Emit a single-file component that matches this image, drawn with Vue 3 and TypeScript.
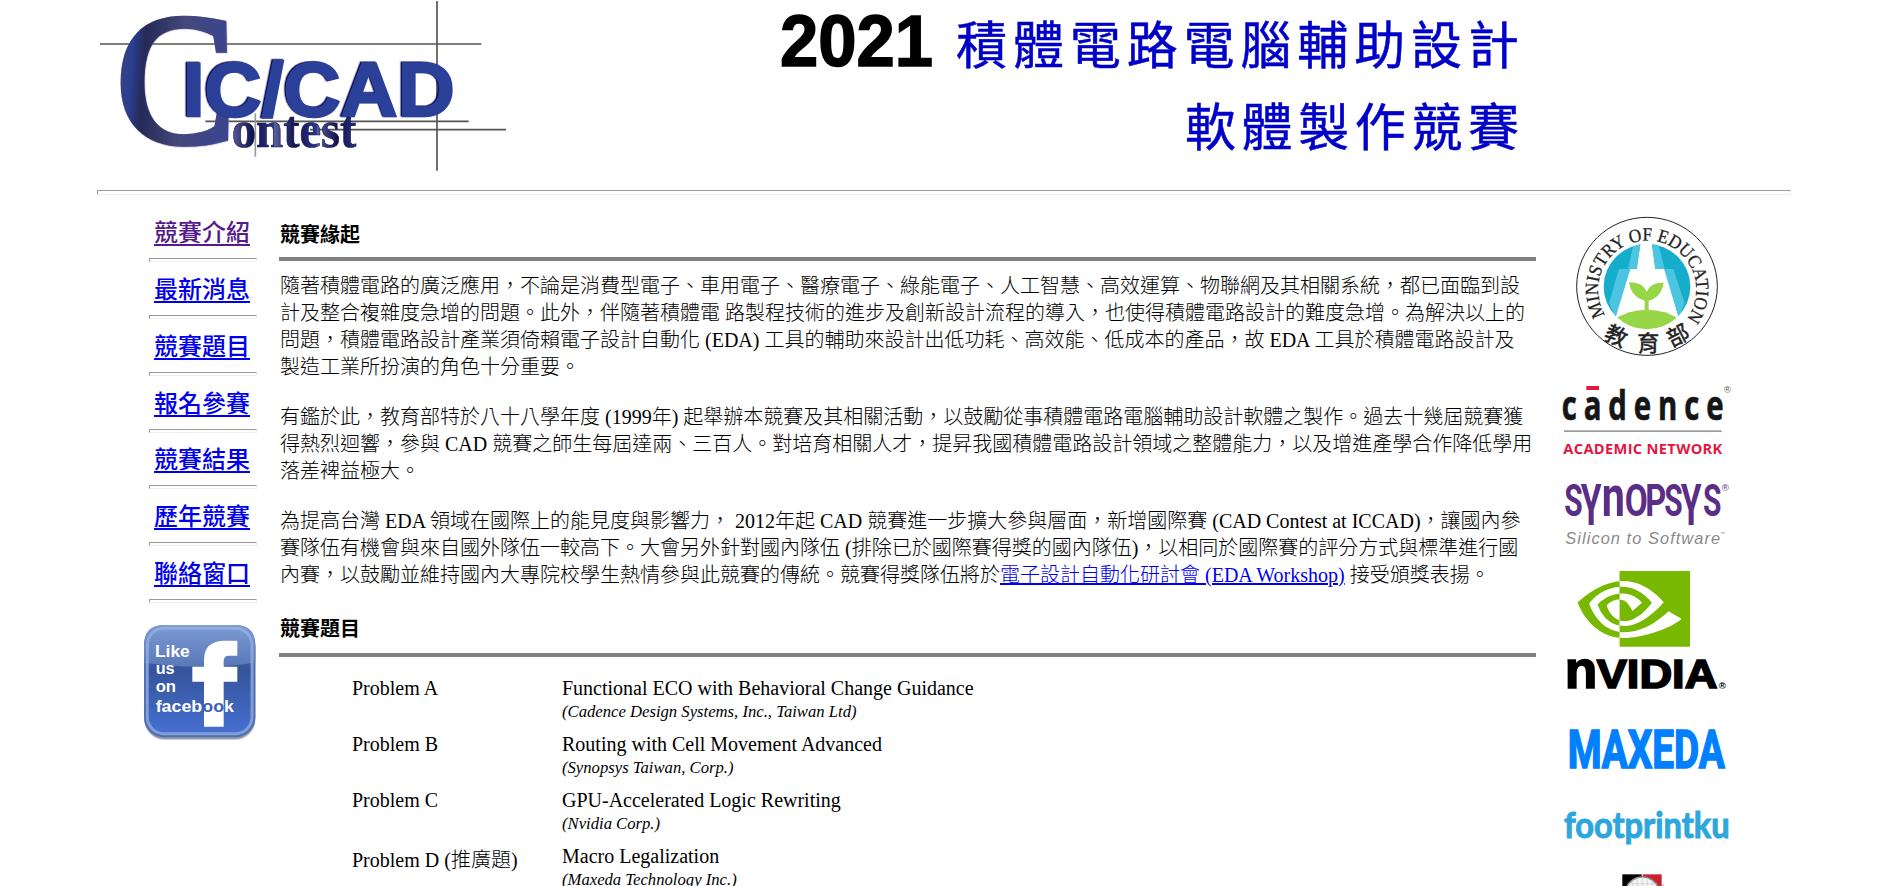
<script setup lang="ts">
interface NavItem { label: string; visited?: boolean }
interface Problem { name: string; title: string; sponsor: string; lowered?: boolean }

const nav: NavItem[] = [
  { label: '競賽介紹', visited: true },
  { label: '最新消息' },
  { label: '競賽題目' },
  { label: '報名參賽' },
  { label: '競賽結果' },
  { label: '歷年競賽' },
  { label: '聯絡窗口' },
]

const intro: string[][] = [
  [
    '隨著積體電路的廣泛應用，不論是消費型電子、車用電子、醫療電子、綠能電子、人工智慧、高效運算、物聯網及其相關系統，都已面臨到設',
    '計及整合複雜度急增的問題。此外，伴隨著積體電 路製程技術的進步及創新設計流程的導入，也使得積體電路設計的難度急增。為解決以上的',
    '問題，積體電路設計產業須倚賴電子設計自動化 (EDA) 工具的輔助來設計出低功耗、高效能、低成本的產品，故 EDA 工具於積體電路設計及',
    '製造工業所扮演的角色十分重要。',
  ],
  [
    '有鑑於此，教育部特於八十八學年度 (1999年) 起舉辦本競賽及其相關活動，以鼓勵從事積體電路電腦輔助設計軟體之製作。過去十幾屆競賽獲',
    '得熱烈迴響，參與 CAD 競賽之師生每屆達兩、三百人。對培育相關人才，提昇我國積體電路設計領域之整體能力，以及增進產學合作降低學用',
    '落差裨益極大。',
  ],
]

const problems: Problem[] = [
  { name: 'Problem A', title: 'Functional ECO with Behavioral Change Guidance', sponsor: '(Cadence Design Systems, Inc., Taiwan Ltd)' },
  { name: 'Problem B', title: 'Routing with Cell Movement Advanced', sponsor: '(Synopsys Taiwan, Corp.)' },
  { name: 'Problem C', title: 'GPU-Accelerated Logic Rewriting', sponsor: '(Nvidia Corp.)' },
  { name: 'Problem D (推廣題)', title: 'Macro Legalization', sponsor: '(Maxeda Technology Inc.)', lowered: true },
]
</script>

<template>
  <div class="page" lang="zh-Hant">
    <header class="banner">
      <svg class="logo" viewBox="0 0 1290 570" role="img" aria-label="CIC/CAD Contest">
        <defs>
          <linearGradient id="bigC" x1="0" x2="1" y1="0" y2="0.1">
            <stop offset="0" stop-color="#8582ac" />
            <stop offset="0.07" stop-color="#3a4080" />
            <stop offset="0.17" stop-color="#2a3f92" />
            <stop offset="0.27" stop-color="#252a58" />
            <stop offset="0.6" stop-color="#45487c" />
            <stop offset="1" stop-color="#3a4590" />
          </linearGradient>
          <linearGradient id="small" x1="0" x2="0.34" y1="0" y2="0" spreadMethod="repeat">
            <stop offset="0" stop-color="#5a5f9c" />
            <stop offset="0.5" stop-color="#10104a" />
            <stop offset="1" stop-color="#2b3990" />
          </linearGradient>
        </defs>
        <g stroke="#555" stroke-width="5" fill="none">
          <path d="M30 132H1174M1041 3V512M346 364H1136M660 389H1248" />
          <path d="M496 340V470" stroke="#999" />
        </g>
        <text class="serif bevel" font-size="558" transform="translate(78 427) scale(0.965 1)" fill="url(#bigC)" stroke="url(#bigC)" stroke-width="17">C</text>
        <text class="sans inset" font-weight="700" font-size="230" x="278" y="349" textLength="816" lengthAdjust="spacingAndGlyphs" fill="#2b4099" stroke="#2b4099" stroke-width="7">IC/CAD</text>
        <text class="serif" font-weight="700" font-size="158" x="425" y="441" textLength="374" lengthAdjust="spacingAndGlyphs" fill="url(#small)" stroke="#14144e" stroke-width="2">ontest</text>
      </svg>
      <svg class="title" viewBox="0 0 780 190" role="img" aria-label="2021 積體電路電腦輔助設計軟體製作競賽">
        <text class="sans" font-weight="700" font-size="73" x="10" y="66" textLength="153" lengthAdjust="spacingAndGlyphs" stroke="#000" stroke-width="1.5">2021</text>
        <g class="kai" font-size="51" fill="#0000c8" stroke="#0000c8" stroke-width="0.5">
          <text x="186" y="64" textLength="563">積體電路電腦輔助設計</text>
          <text x="415" y="146" textLength="334">軟體製作競賽</text>
        </g>
      </svg>
    </header>
    <hr class="divider" />

    <div class="columns">
      <nav class="menu">
        <div v-for="item in nav" :key="item.label" class="menu-item">
          <a href="#" :class="{ visited: item.visited }">{{ item.label }}</a>
          <hr />
        </div>
        <svg class="facebook" viewBox="30 660 360 380" role="img" aria-label="Like us on facebook">
          <defs>
            <linearGradient id="fbBase" x1="0" x2="0" y1="0" y2="1">
              <stop offset="0" stop-color="#4b6db5" />
              <stop offset="0.4" stop-color="#36549b" />
              <stop offset="1" stop-color="#456fd0" />
            </linearGradient>
            <linearGradient id="fbGloss" x1="0" x2="0" y1="0" y2="1">
              <stop offset="0" stop-color="#7d9ad2" />
              <stop offset="1" stop-color="#5878b8" />
            </linearGradient>
          </defs>
          <rect x="44" y="684" width="332" height="336" rx="60" fill="#000" opacity="0.2" />
          <rect x="42" y="680" width="334" height="336" rx="60" fill="#3a4f80" opacity="0.5" />
          <rect x="42" y="675" width="334" height="336" rx="60" fill="#4c6fb8" />
          <rect x="54" y="688" width="310" height="310" rx="46" fill="url(#fbBase)" />
          <path d="M42 788V735Q42 675 102 675H316Q376 675 376 735V788Q209 812 42 788Z" fill="url(#fbGloss)" />
          <rect x="52" y="685" width="314" height="316" rx="50" fill="none" stroke="#9fb7e3" stroke-opacity="0.65" stroke-width="9" />
          <path d="M222 980V845H187V800H222V780Q222 722 285 722H322V767H296Q281 767 281 784V800H322V845H281V980Z" fill="#fff" />
          <g class="sans" font-weight="700" font-size="52" fill="#fff">
            <text x="75" y="770" textLength="104" lengthAdjust="spacingAndGlyphs">Like</text>
            <text x="77" y="823" textLength="57" lengthAdjust="spacingAndGlyphs">us</text>
            <text x="77" y="877" textLength="61" lengthAdjust="spacingAndGlyphs">on</text>
            <text x="77" y="937" font-size="48" textLength="235" lengthAdjust="spacingAndGlyphs">faceb<tspan fill="#3d60b0">oo</tspan>k</text>
          </g>
        </svg>
      </nav>

      <main class="content">
        <h2>競賽緣起</h2>
        <p v-for="(para, i) in intro" :key="i">
          <span v-for="line in para" :key="line" class="line">{{ line }}</span>
        </p>
        <p>
          <span class="line">為提高台灣 EDA 領域在國際上的能見度與影響力， 2012年起 CAD 競賽進一步擴大參與層面，新增國際賽 (CAD Contest at ICCAD)，讓國內參</span>
          <span class="line">賽隊伍有機會與來自國外隊伍一較高下。大會另外針對國內隊伍 (排除已於國際賽得獎的國內隊伍)，以相同於國際賽的評分方式與標準進行國</span>
          <span class="line">內賽，以鼓勵並維持國內大專院校學生熱情參與此競賽的傳統。競賽得獎隊伍將於<a href="#">電子設計自動化研討會 (EDA Workshop)</a> 接受頒獎表揚。</span>
        </p>
        <h2 class="second">競賽題目</h2>
        <div class="problems">
          <div v-for="p in problems" :key="p.name" class="problem">
            <div class="name" :class="{ lowered: p.lowered }">{{ p.name }}</div>
            <div>
              <div class="topic">{{ p.title }}</div>
              <div class="sponsor">{{ p.sponsor }}</div>
            </div>
          </div>
        </div>
      </main>

      <aside class="sponsors">
        <svg width="200" height="170" viewBox="0 0 600 510" role="img" aria-label="Ministry of Education">
          <defs>
            <path id="ring" d="M166 345A147 147 0 1 1 414 350" />
            <clipPath id="disc"><ellipse cx="291" cy="260" rx="130" ry="128" /></clipPath>
          </defs>
          <ellipse cx="291" cy="259" rx="211" ry="207" fill="#fff" stroke="#222" stroke-width="3" />
          <g clip-path="url(#disc)">
            <path d="M150 120H273L260 207H236L196 352H150Z" fill="#16adcb" />
            <path d="M253 120H273L260 207H241L197 352L177 310L207 207H234Z" fill="#4cc5e2" />
            <path d="M304 120H430V352H386L345 207H316Z" fill="#16adcb" />
            <path d="M304 120H322L344 207H370L404 310L386 352L342 207H316Z" fill="#4cc5e2" />
            <path d="M190 360Q235 329 291 329T392 360V400H190Z" fill="#97d646" />
          </g>
          <path d="M284 332V302Q244 292 237 247Q280 247 290 275Q301 247 341 248Q335 291 296 302V332Z" fill="#97d646" />
          <text class="serif" font-size="56" fill="#222" stroke="#222" stroke-width="0.8">
            <textPath href="#ring" textLength="636" lengthAdjust="spacingAndGlyphs">MINISTRY OF EDUCATION</textPath>
          </text>
          <g class="kai" font-size="66" fill="#222" stroke="#222" stroke-width="1.5" text-anchor="middle">
            <text transform="translate(198 408) rotate(25)" y="24">教</text>
            <text transform="translate(295 430)" y="24">育</text>
            <text transform="translate(384 406) rotate(-27)" y="24">部</text>
          </g>
        </svg>

        <svg width="200" height="190" viewBox="0 0 600 570" role="img" aria-label="Cadence Academic Network, Synopsys">
          <g class="open" font-weight="700" font-size="126" fill="#151515" stroke="#151515" stroke-width="2">
            <text transform="translate(35 151) scale(0.7 1)" textLength="694">cadence</text>
          </g>
          <rect x="109" y="48" width="38" height="12" fill="#e3173e" />
          <text class="sans" x="522" y="69" font-size="28" fill="#555">®</text>
          <rect x="42" y="181" width="473" height="5" fill="#999" />
          <text class="open" font-weight="700" font-size="44" x="40" y="251" textLength="477" fill="#e3173e">ACADEMIC NETWORK</text>
          <g class="robo" font-weight="700" font-size="132" fill="#5a2d86">
            <text transform="translate(43 438) scale(0.68 1)">S</text>
            <text transform="translate(92 464) scale(0.76 1.29)">Y</text>
            <text transform="translate(155 438) scale(0.94 1.31)">n</text>
            <text transform="translate(224 438) scale(0.76 1)">O</text>
            <text transform="translate(286 438) scale(0.74 1)">P</text>
            <text transform="translate(343 438) scale(0.68 1)">S</text>
            <text transform="translate(392 464) scale(0.76 1.29)">Y</text>
            <text transform="translate(459 438) scale(0.68 1)">S</text>
          </g>
          <text class="sans" x="515" y="363" font-size="29" fill="#5a2d86">®</text>
          <text class="sans" font-style="italic" font-size="49" x="46" y="521" textLength="464" fill="#8a8a8a">Silicon to Software</text>
          <text class="sans" x="511" y="494" font-size="14" fill="#8a8a8a">™</text>
        </svg>

        <svg width="200" height="150" viewBox="0 0 600 450" role="img" aria-label="NVIDIA">
          <path transform="translate(83 -25.1) scale(14.04 14.3)" fill="#76b900" d="M8.948 8.798v-1.43a6.7 6.7 0 0 1 .424-.018c3.922-.124 6.493 3.374 6.493 3.374s-2.774 3.851-5.75 3.851c-.398 0-.787-.062-1.158-.185v-4.346c1.528.185 1.837.857 2.747 2.385l2.04-1.714s-1.492-1.952-4-1.952a6.016 6.016 0 0 0-.796.035m0-4.735v2.138l.424-.027c5.45-.185 9.01 4.47 9.01 4.47s-4.08 4.964-8.33 4.964c-.37 0-.733-.035-1.095-.097v1.325c.3.035.61.062.91.062 3.957 0 6.82-2.023 9.593-4.408.459.371 2.34 1.263 2.73 1.652-2.633 2.208-8.772 3.984-12.253 3.984-.335 0-.653-.018-.971-.053v1.864H24V4.063zm0 10.326v1.131c-3.657-.654-4.673-4.46-4.673-4.46s1.758-1.944 4.673-2.262v1.237H8.94c-1.528-.186-2.73 1.245-2.73 1.245s.68 2.412 2.739 3.11M2.456 10.9s2.164-3.197 6.5-3.533V6.201C4.153 6.59 0 10.653 0 10.653s2.35 6.802 8.948 7.42v-1.237c-4.84-.6-6.492-5.936-6.492-5.936z" />
          <g class="sans" font-weight="700" fill="#000" stroke="#000" stroke-width="5">
            <text transform="translate(44 385) scale(1.02 1)" font-size="157">n</text>
            <text x="140" y="385" font-size="121" textLength="362" lengthAdjust="spacingAndGlyphs">VIDIA</text>
          </g>
          <text class="sans" x="506" y="387" font-size="29" font-weight="700">®</text>
        </svg>

        <svg width="200" height="176" viewBox="0 0 600 528" role="img" aria-label="Maxeda, Footprintku">
          <text class="robo" font-weight="700" font-size="160" fill="#0080ff" stroke="#0080ff" stroke-width="5" x="53" y="175" textLength="471" lengthAdjust="spacingAndGlyphs">MAXEDA</text>
          <text class="lato" font-weight="700" font-size="108" fill="#2ca6dc" stroke="#2ca6dc" stroke-width="3" x="42" y="383" textLength="497" lengthAdjust="spacingAndGlyphs">footprintku</text>
          <rect x="217" y="493" width="58" height="40" fill="#000" />
          <rect x="278" y="493" width="57" height="40" fill="#c9202c" />
          <ellipse cx="277" cy="554" rx="52" ry="53" fill="#f4f4f4" stroke="#888" stroke-width="5" />
          <path d="M247 510V528M262 503V528M277 501V528M292 503V528M307 510V528M235 521H320" stroke="#ccc" stroke-width="2" />
          <path d="M336 524H342V528H336Z" fill="#d9b98c" />
        </svg>
      </aside>
    </div>
  </div>
</template>

<style>
body { margin: 0; background: #fff; }
</style>

<style scoped>
.page {
  box-sizing: border-box;
  width: 1879px;
  height: 886px;
  overflow: hidden;
  padding: 0 88px 0 97px;
  color: #000;
  font: 300 20px/27px "Liberation Serif", "Noto Sans CJK TC", serif;
}
svg { display: block; flex: none; overflow: visible; }
.serif { font-family: "Liberation Serif", serif; }
.sans { font-family: "Liberation Sans", sans-serif; }
.open { font-family: "Open Sans", sans-serif; }
.robo { font-family: Roboto, sans-serif; }
.lato { font-family: Lato, sans-serif; }
.kai { font-family: "Noto Sans CJK TC", sans-serif; font-weight: 400; }
.bevel { filter: drop-shadow(1px 1px 0 #8884a8); }
.inset { filter: drop-shadow(-4px -2px 0 #07074a); }
.banner { display: flex; gap: 250px; height: 190px; margin-left: -7px; }
.logo { width: 430px; height: 190px; }
.title { width: 780px; height: 190px; }
hr { box-sizing: border-box; height: 4px; margin: 0; border: 1px solid; border-color: #9a9a9a #eee #eee #9a9a9a; }
.divider { height: 5px; }
a { color: #00e; text-decoration: underline; }
a.visited { color: #551a8b; }
.columns { display: flex; align-items: flex-start; }
.menu { width: 112px; margin: 10px 24px 0 46px; flex: none; }
.menu-item { display: flex; flex-direction: column; justify-content: flex-end; height: 56.9px; width: 108px; margin-left: 6px; }
.menu-item a {
  width: 96px;
  margin: 0 0 11px 5px;
  font: 500 24px/32px "Noto Sans CJK TC", sans-serif;
  text-decoration-thickness: 2px;
  text-underline-offset: 3px;
}
.facebook { width: 120px; height: 126.67px; margin: 17px 0 0 -3px; }
.content { width: 1257px; margin-top: 20px; flex: none; }
h2 {
  margin: 0 0 12px;
  padding: 5px 1px 10px;
  border-bottom: 4px solid #808080;
  font: 700 20px/27px "Noto Sans CJK TC", sans-serif;
}
h2.second { padding: 0 1px 12px; margin: 25px 0 9px; }
p { margin: 0 0 23px 1px; }
.line { display: block; height: 27px; white-space: nowrap; }
.problems { padding: 9px 0 0 73px; }
.problem { display: flex; height: 56px; }
.name { width: 210px; line-height: 26px; }
.name.lowered { padding-top: 4px; }
.topic { line-height: 26px; }
.sponsor { font-size: 16.67px; font-style: italic; line-height: 22px; }
.sponsors { margin: 5px 0 0 14px; width: 200px; flex: none; }
</style>
